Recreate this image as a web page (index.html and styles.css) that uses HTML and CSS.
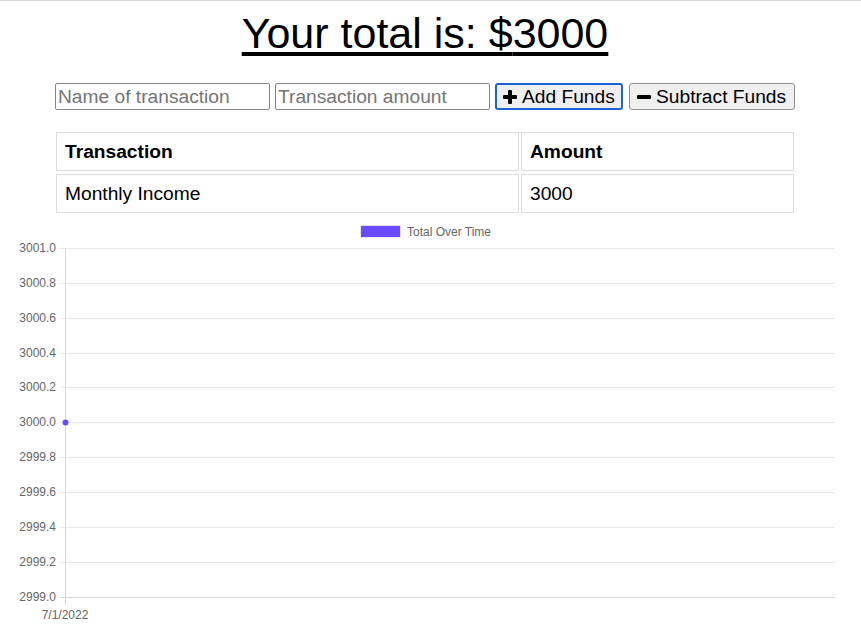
FILE: index.html
```html
<!DOCTYPE html>
<html lang="en">
<head>
<meta charset="utf-8">
<title>Budget Tracker</title>
<link rel="stylesheet" href="styles.css">
</head>
<body>
<div class="page">
  <h1 class="total"><u>Your total is: $<span class="amount">3000</span></u></h1>
  <div class="form">
    <input class="field" type="text" placeholder="Name of transaction">
    <input class="field" type="text" placeholder="Transaction amount">
    <button class="btn btn-add"><svg class="ico" viewBox="0 0 14 14" width="14" height="14"><rect x="5" y="0" width="4" height="14" rx="1"/><rect x="0" y="5" width="14" height="4" rx="1"/></svg>Add Funds</button>
    <button class="btn btn-sub"><svg class="ico" viewBox="0 0 14 14" width="14" height="14"><rect x="0" y="5" width="14" height="4" rx="1"/></svg>Subtract Funds</button>
  </div>
  <table class="tx">
    <thead>
      <tr><th class="c1">Transaction</th><th class="c2">Amount</th></tr>
    </thead>
    <tbody>
      <tr><td>Monthly Income</td><td>3000</td></tr>
    </tbody>
  </table>
  <svg class="chart" width="850" height="411" viewBox="0 216 850 411">
    <g class="legend">
      <rect x="360.5" y="225.5" width="40" height="12" fill="#6b4bff" stroke="#e6e3f5" stroke-width="1"/>
      <text x="407" y="236" class="lbl">Total Over Time</text>
    </g>
    <g class="grid" stroke="#e8e8e8" stroke-width="1">
      <line x1="60" y1="248.5" x2="835" y2="248.5"/>
      <line x1="60" y1="283.5" x2="835" y2="283.5"/>
      <line x1="60" y1="318.5" x2="835" y2="318.5"/>
      <line x1="60" y1="353.5" x2="835" y2="353.5"/>
      <line x1="60" y1="387.5" x2="835" y2="387.5"/>
      <line x1="60" y1="422.5" x2="835" y2="422.5"/>
      <line x1="60" y1="457.5" x2="835" y2="457.5"/>
      <line x1="60" y1="492.5" x2="835" y2="492.5"/>
      <line x1="60" y1="527.5" x2="835" y2="527.5"/>
      <line x1="60" y1="562.5" x2="835" y2="562.5"/>
    </g>
    <line x1="60" y1="597.5" x2="835" y2="597.5" stroke="#d6d6d6"/>
    <line x1="65.5" y1="248" x2="65.5" y2="605" stroke="#d6d6d6"/>
    <g class="ylabels">
      <text x="56" y="252">3001.0</text>
      <text x="56" y="287">3000.8</text>
      <text x="56" y="322">3000.6</text>
      <text x="56" y="357">3000.4</text>
      <text x="56" y="391">3000.2</text>
      <text x="56" y="426">3000.0</text>
      <text x="56" y="461">2999.8</text>
      <text x="56" y="496">2999.6</text>
      <text x="56" y="531">2999.4</text>
      <text x="56" y="566">2999.2</text>
      <text x="56" y="601">2999.0</text>
    </g>
    <text x="65" y="619" class="xlabel">7/1/2022</text>
    <circle cx="65.5" cy="422.5" r="3" fill="#6b4bff"/>
  </svg>
</div>
</body>
</html>
```

FILE: styles.css
```css
html, body {
  margin: 0;
  padding: 0;
  background: #ffffff;
}

body {
  border-top: 1px solid #d3d3d3;
  font-family: "Liberation Sans", Arial, Helvetica, sans-serif;
  color: #000;
}

.page {
  width: 850px;
}

.total {
  margin: 8px 0 0 0;
  font-size: 43px;
  font-weight: normal;
  line-height: 1.15;
  text-align: center;
}

.total u {
  text-decoration-thickness: 4px;
  text-underline-offset: 4px;
}

.form {
  display: flex;
  justify-content: center;
  gap: 5px;
  margin-top: 25px;
  height: 27px;
}

.field {
  box-sizing: border-box;
  width: 215px;
  height: 27px;
  margin: 0;
  padding: 1px 2px;
  border: 1px solid #858585;
  border-radius: 2px;
  font-family: "Liberation Sans", Arial, sans-serif;
  font-size: 19.2px;
  color: #000;
  background: #fff;
}

.field::placeholder {
  color: #757575;
}

.btn {
  box-sizing: border-box;
  height: 27px;
  margin: 0;
  padding: 0 6px;
  display: flex;
  align-items: center;
  gap: 5px;
  border: 1px solid #8f8f8f;
  border-radius: 3px;
  background: #efefef;
  font-family: "Liberation Sans", Arial, sans-serif;
  font-size: 19.2px;
  color: #000;
}

.btn-add {
  width: 128px;
  border: 2px solid #1d63d8;
  padding: 0 6px;
}

.btn-sub {
  width: 166px;
  margin-left: 1px;
  padding: 0 7px;
}

.ico {
  fill: #000;
  flex: none;
}

.tx {
  width: 742px;
  margin: 19px 0 0 54px;
  border-collapse: separate;
  border-spacing: 2px 3px;
  font-size: 19.2px;
}

.tx th,
.tx td {
  border: 1px solid #dddddd;
  padding: 8px 8px;
  line-height: 21px;
  text-align: left;
}

.tx th {
  font-weight: bold;
}

.tx .c1 {
  width: 445px;
}

.chart {
  display: block;
  margin-top: 0;
  font-family: "Liberation Sans", Arial, sans-serif;
}

.chart .lbl {
  font-size: 12px;
  fill: #666666;
}

.chart .ylabels text {
  font-size: 12px;
  fill: #666666;
  text-anchor: end;
}

.chart .xlabel {
  font-size: 12px;
  fill: #666666;
  text-anchor: middle;
}
```
